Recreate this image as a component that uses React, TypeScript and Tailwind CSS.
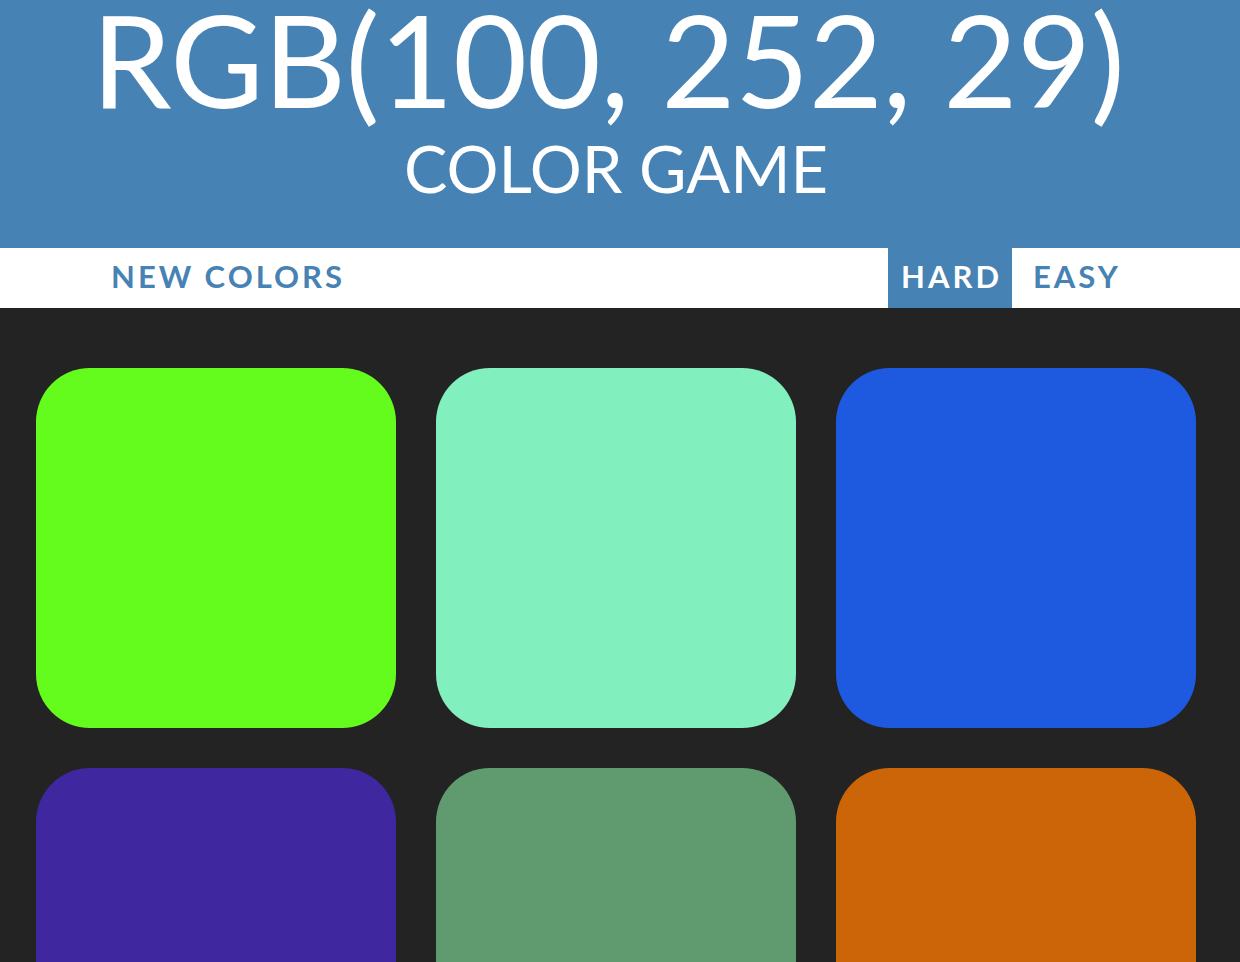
import React from "react";

const squares = ["#64fc1d", "#82efbf", "#1e5adf", "#3f279f", "#609b70", "#cc6507"];

export default function App() {
  return (
    <div className="min-h-[962px] bg-[#232323] font-['Lato',sans-serif] overflow-hidden">
      <div className="h-[248px] bg-[#4682b4] text-white flex flex-col items-center">
        <h1 className="text-[128px] leading-[108px] font-normal mt-[5px] pr-[24px] tracking-[-0.5px]">RGB(100, 252, 29)</h1>
        <div className="text-[65px] leading-none mt-[23px] pr-[8px]">COLOR GAME</div>
      </div>

      <div className="h-[60px] bg-white flex items-stretch text-[#4682b4] font-bold text-[31px] tracking-[3px]">
        <button type="button" className="ml-[111px] pb-[3px]">NEW COLORS</button>
        <div className="flex-1" />
        <button type="button" className="w-[124px] bg-[#4682b4] text-white pb-[3px] pl-[3px]">HARD</button>
        <button type="button" className="w-[124px] pl-[21px] text-left pb-[3px] mr-[104px]">EASY</button>
      </div>

      <div className="grid grid-cols-[360px_360px_360px] gap-[40px] pl-[36px] pt-[60px]">
        {squares.map((c, i) => (
          <div key={i} className="w-[360px] h-[360px] rounded-[54px]" style={{ backgroundColor: c }} />
        ))}
      </div>
    </div>
  );
}
